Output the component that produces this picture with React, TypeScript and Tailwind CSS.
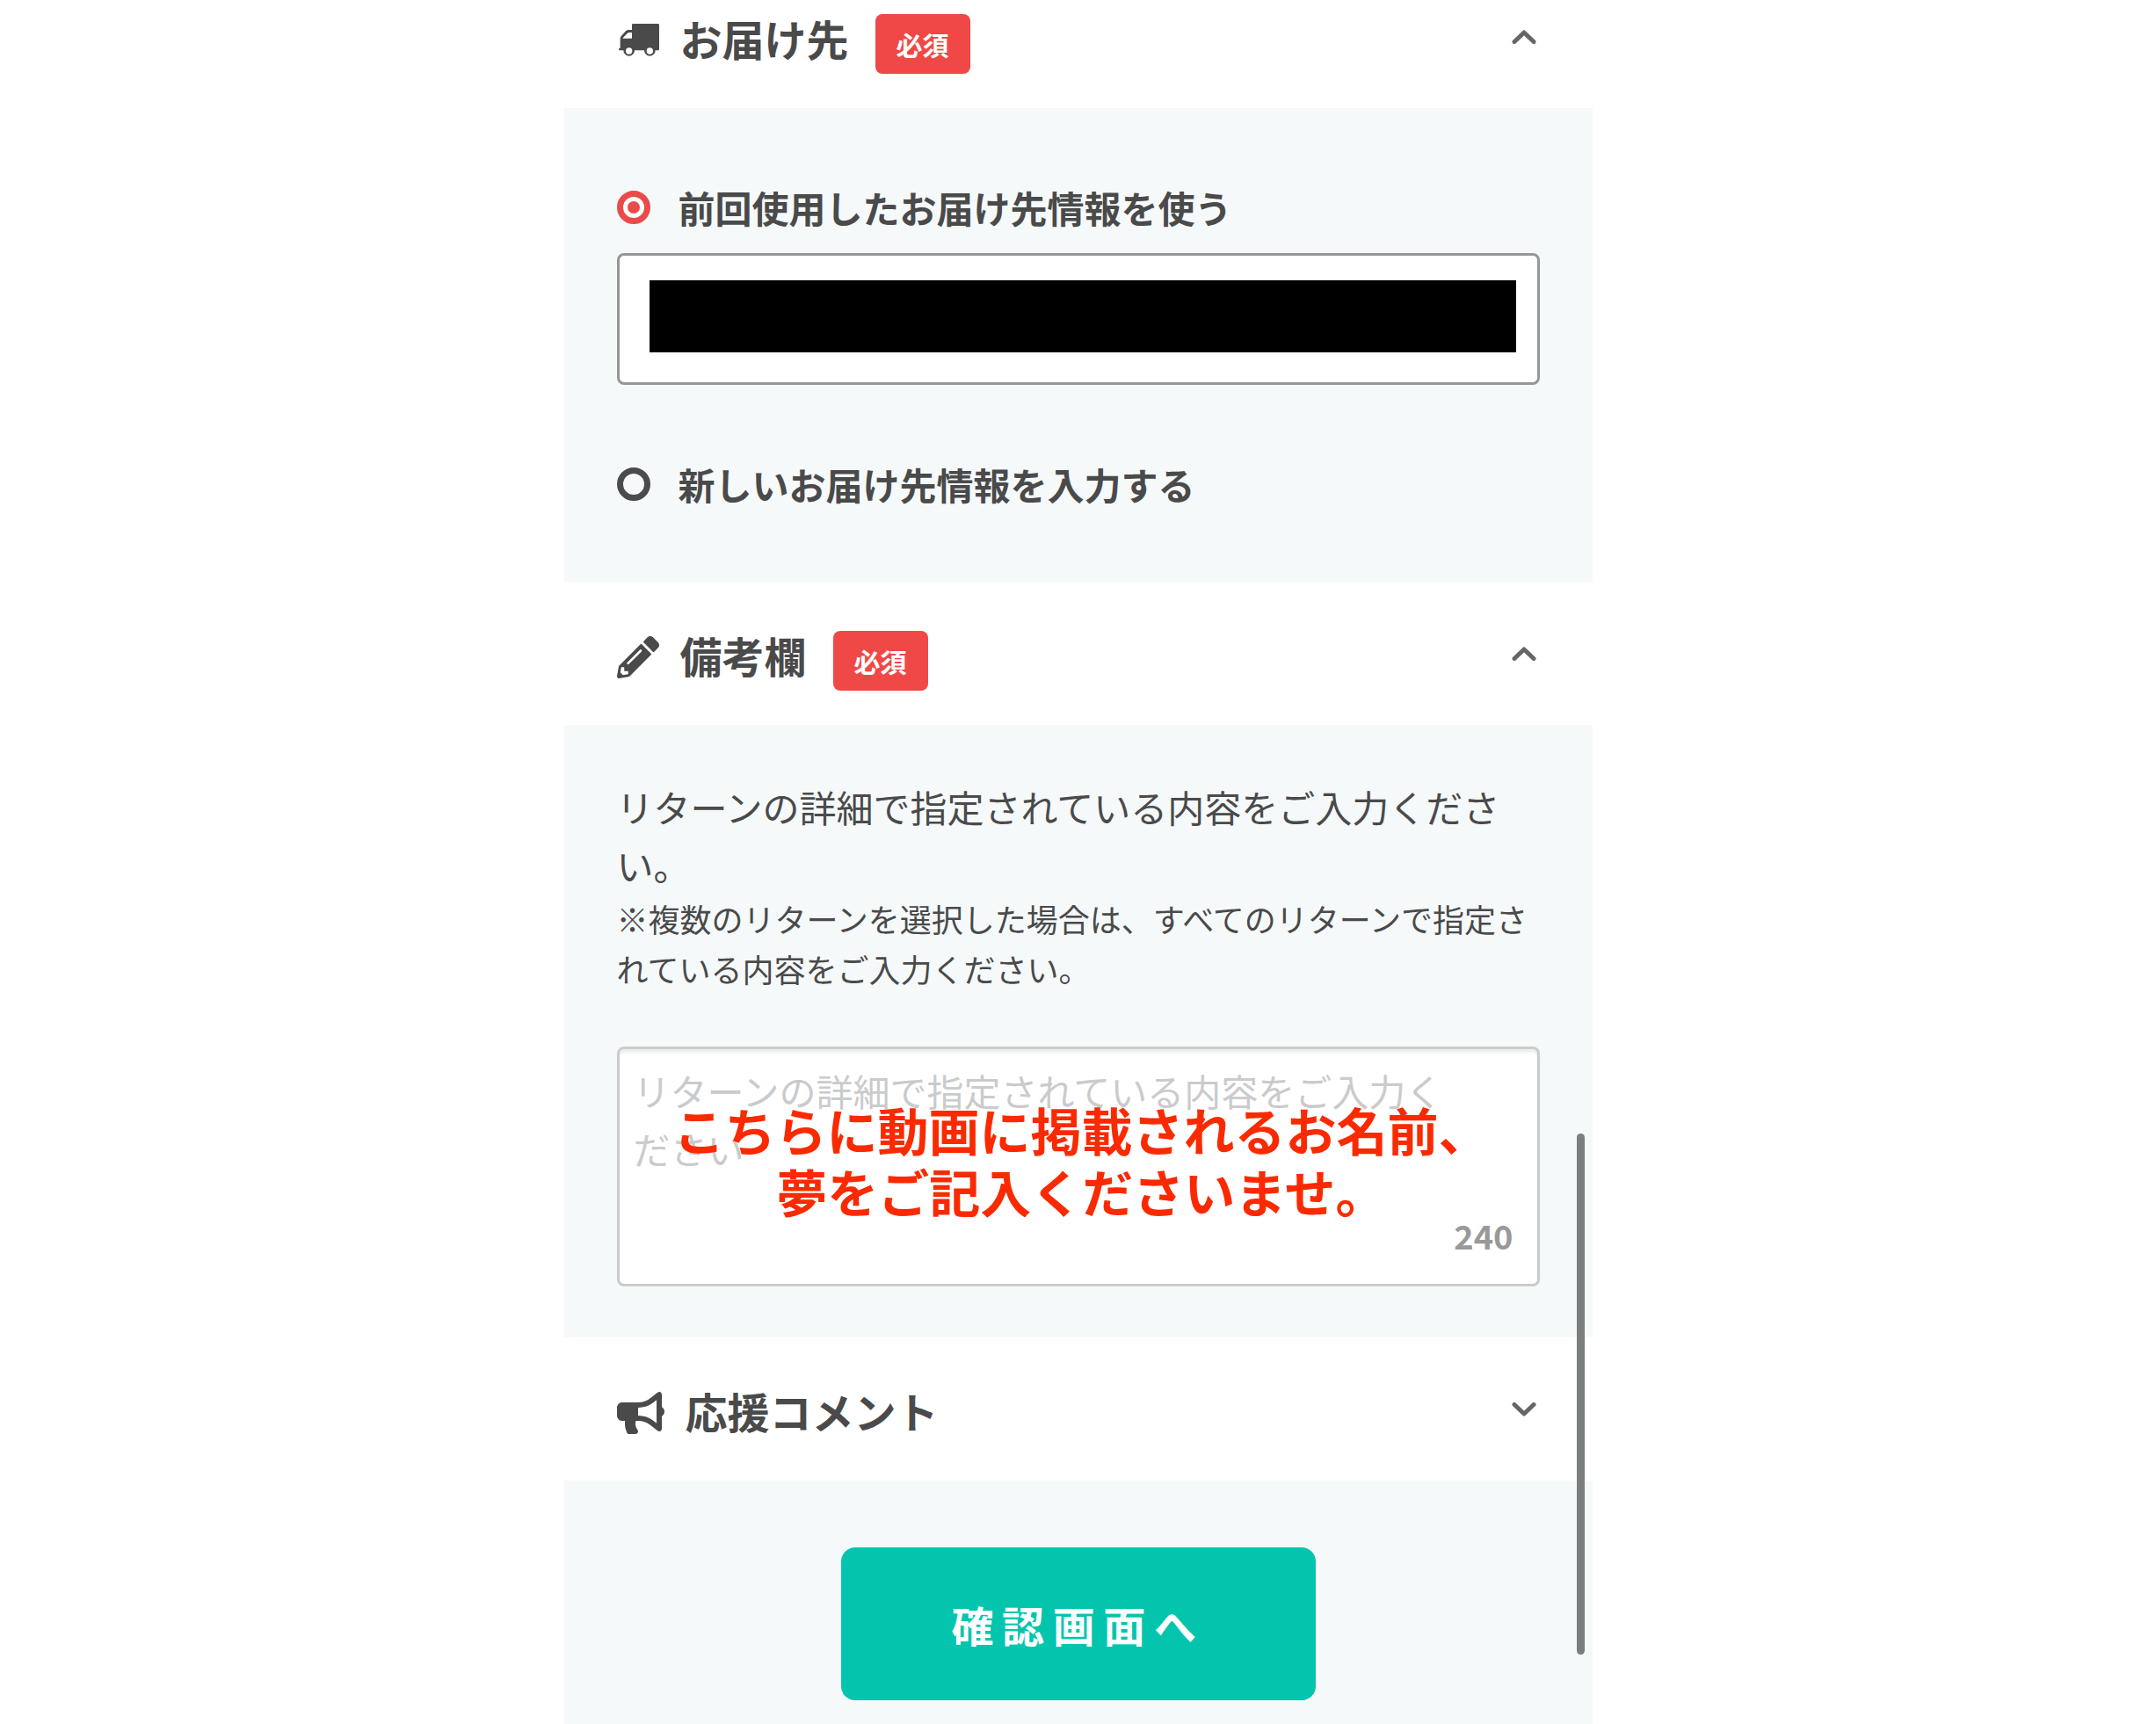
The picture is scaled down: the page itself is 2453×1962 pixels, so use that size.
import { useState, type ReactNode } from "react"
import { FaBullhorn, FaPencilAlt } from "react-icons/fa"

function TruckIcon({ className }: { className?: string }) {
  return (
    <svg viewBox="27 57 138 112" fill="currentColor" aria-hidden="true" className={className}>
      <path
        fillRule="evenodd"
        d="M76 57H161Q165 57 165 61V144Q165 148 161 148H152A19 19 0 1 1 114 148H81A19 19 0 1 1 43 148H30Q27 148 27 145V143Q27 140 30 140H32V108Q32 102 36 98L51 82Q55 78 61 78H72V61Q72 57 76 57ZM41 107H72V87H62Q59 87 57 89L42 104Q41 105 41 107ZM62 139A11 11 0 1 0 62 161A11 11 0 1 0 62 139ZM133 139A11 11 0 1 0 133 161A11 11 0 1 0 133 139Z"
      />
    </svg>
  )
}

function Chevron({ open }: { open: boolean }) {
  return (
    <svg
      viewBox="0 0 28 16"
      fill="none"
      stroke="#666"
      strokeWidth="5"
      strokeLinecap="round"
      strokeLinejoin="round"
      aria-hidden="true"
      className="h-4 w-7"
    >
      <path d={open ? "M3 13.5 14 3 25 13.5" : "M3 2.5 14 13 25 2.5"} />
    </svg>
  )
}

type SectionHeaderProps = {
  icon: ReactNode
  title: string
  required?: boolean
  open: boolean
  onToggle: () => void
}

function SectionHeader({ icon, title, required, open, onToggle }: SectionHeaderProps) {
  return (
    <h2>
      <button
        type="button"
        aria-expanded={open}
        onClick={onToggle}
        className="flex h-[163px] w-full items-center bg-white px-15 text-left"
      >
        <span className="flex items-center pt-2">
          {icon}
          <span className="pb-1.5 text-[48px] leading-[68px] font-bold">{title}</span>
          {required && (
            <span className="mt-2 ml-[30px] rounded-lg bg-[#f04846] px-6 text-[30px] leading-[68px] font-bold text-white">
              必須
            </span>
          )}
        </span>
        <span className="mr-1 ml-auto">
          <Chevron open={open} />
        </span>
      </button>
    </h2>
  )
}

type RadioRowProps = {
  value: string
  label: string
  checked: boolean
  onChange: (value: string) => void
}

function RadioRow({ value, label, checked, onChange }: RadioRowProps) {
  return (
    <label className="flex items-center text-[42px] leading-[66px] font-bold">
      <span className="relative mr-8 flex size-[38px] shrink-0 items-center justify-center">
        <input
          type="radio"
          name="destination"
          value={value}
          checked={checked}
          onChange={() => onChange(value)}
          className="size-[38px] appearance-none rounded-full border-7 border-[#4a4b4c] checked:border-[#ea4a4a] checked:bg-white"
        />
        {checked && <span className="absolute size-3.5 rounded-full bg-[#ea4a4a]" />}
      </span>
      {label}
    </label>
  )
}

export default function App() {
  const [openSections, setOpenSections] = useState({ address: true, note: true, comment: false })
  const [destination, setDestination] = useState("previous")
  const [note, setNote] = useState("")

  const toggle = (key: keyof typeof openSections) =>
    setOpenSections((prev) => ({ ...prev, [key]: !prev[key] }))

  return (
    <div className="flex min-h-screen justify-center overflow-hidden bg-white font-['Noto_Sans_CJK_JP',sans-serif] text-[#4a4a4a]">
      <form className="relative -mt-10 flex w-full max-w-[1170px] flex-col" onSubmit={(e) => e.preventDefault()}>
        <SectionHeader
          icon={<TruckIcon className="mr-6 ml-0.5 w-[46px]" />}
          title="お届け先"
          required
          open={openSections.address}
          onToggle={() => toggle("address")}
        />
        {openSections.address && (
          <section className="bg-[#f5f9fa] px-15 pt-20 pb-[78px]">
            <RadioRow
              value="previous"
              label="前回使用したお届け先情報を使う"
              checked={destination === "previous"}
              onChange={setDestination}
            />
            <div className="mt-[19px] mb-20 rounded-lg border-3 border-[#969797] bg-white pt-7 pr-6 pb-[34px] pl-[34px]">
              <div className="h-[82px] bg-black" />
            </div>
            <RadioRow
              value="new"
              label="新しいお届け先情報を入力する"
              checked={destination === "new"}
              onChange={setDestination}
            />
          </section>
        )}

        <SectionHeader
          icon={<FaPencilAlt className="mr-6 size-12" />}
          title="備考欄"
          required
          open={openSections.note}
          onToggle={() => toggle("note")}
        />
        {openSections.note && (
          <section className="bg-[#f5f9fa] px-15 pt-15 pb-[58px]">
            <label htmlFor="note" className="block text-[42px] leading-[66px]">
              リターンの詳細で指定されている内容をご入力ください。
            </label>
            <p className="text-[36px] leading-[57px]">
              ※複数のリターンを選択した場合は、すべてのリターンで指定されている内容をご入力ください。
            </p>
            <div className="relative mt-15">
              <textarea
                id="note"
                value={note}
                maxLength={240}
                onChange={(e) => setNote(e.target.value)}
                placeholder="リターンの詳細で指定されている内容をご入力ください"
                className="block h-[273px] w-full resize-none rounded-lg border-3 border-[#c9cbcc] bg-white py-3.5 pr-20 pl-4 text-[42px] leading-[66px] inset-shadow-[0_4px_3px_#eceeef] placeholder:text-[#c9cbcc]"
              />
              <p className="pointer-events-none absolute inset-x-0 top-[59px] pl-2 text-center text-[58px] leading-[70px] font-bold whitespace-nowrap text-[#fa2a00]">
                こちらに動画に掲載されるお名前、
                <br />
                夢をご記入くださいませ。
              </p>
              <span className="absolute right-[30px] bottom-[30px] text-[38px] leading-[56px] font-bold text-[#999]">
                {240 - note.length}
              </span>
            </div>
          </section>
        )}

        <SectionHeader
          icon={<FaBullhorn className="mr-6 h-12 w-[54px]" />}
          title="応援コメント"
          open={openSections.comment}
          onToggle={() => toggle("comment")}
        />
        <div className="flex flex-1 items-start justify-center bg-[#f5f9fa] pt-[76px] pb-[26px]">
          <button
            type="submit"
            className="h-[174px] w-[540px] rounded-2xl bg-[#03c5ae] text-[48px] font-bold tracking-[0.2em] text-white"
          >
            確認画面へ
          </button>
        </div>

        {/* scroll indicator */}
        <div className="absolute top-[1330px] right-[9px] h-[593px] w-[9px] rounded-full bg-[#7b7e7e]" />
      </form>
    </div>
  )
}
